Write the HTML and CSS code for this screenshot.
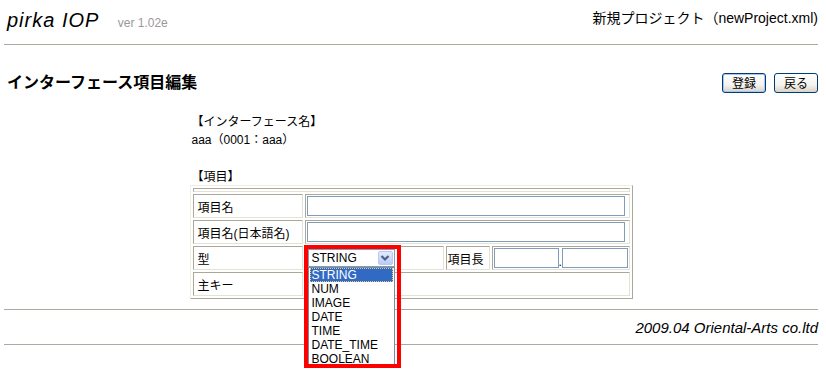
FILE: index.html
```html
<!DOCTYPE html>
<html lang="ja">
<head>
    <meta charset="UTF-8">
    <title>インターフェース項目編集</title>
    <link rel="stylesheet" href="styles.css">
</head>
<body>
    <div class="page">
        <div class="header">
            <div class="brand">
                <span class="logo">pirka IOP</span>
                <span class="ver">ver 1.02e</span>
            </div>
            <div class="project">新規プロジェクト（newProject.xml)</div>
        </div>
        <hr class="rule">

        <div class="title-bar">
            <h1>インターフェース項目編集</h1>
            <div class="actions">
                <button type="button" class="btn btn-default">登録</button>
                <button type="button" class="btn">戻る</button>
            </div>
        </div>

        <div class="content">
            <p class="line">【インターフェース名】</p>
            <p class="line">aaa（0001：aaa）</p>
            <p class="caption">【項目】</p>

            <table class="items">
                <colgroup>
                    <col class="c-label">
                    <col class="c-type">
                    <col class="c-sub">
                    <col class="c-len">
                </colgroup>
                <tr class="spacer">
                    <td colspan="4"></td>
                </tr>
                <tr>
                    <th>項目名</th>
                    <td colspan="3"><input type="text" class="longText" name="name"></td>
                </tr>
                <tr>
                    <th>項目名(日本語名)</th>
                    <td colspan="3"><input type="text" class="longText" name="jname"></td>
                </tr>
                <tr>
                    <th>型</th>
                    <td class="type-cell">
                        <div class="select-wrap">
                            <div class="select">
                                <span>STRING</span>
                                <span class="arrow">
                                    <svg width="12" height="12" viewBox="0 0 12 12"><path d="M2.5 4 L6 7.5 L9.5 4" fill="none" stroke="#4d6185" stroke-width="2.2"/></svg>
                                </span>
                            </div>
                            <ul class="options">
                                <li class="selected">STRING</li>
                                <li>NUM</li>
                                <li>IMAGE</li>
                                <li>DATE</li>
                                <li>TIME</li>
                                <li>DATE_TIME</li>
                                <li>BOOLEAN</li>
                            </ul>
                            <div class="mark"></div>
                        </div>
                    </td>
                    <th class="sub-label">項目長</th>
                    <td>
                        <div class="len">
                            <input type="text" class="shortText" name="len1"><span class="dot">.</span><input type="text" class="shortText wide" name="len2">
                        </div>
                    </td>
                </tr>
                <tr>
                    <th>主キー</th>
                    <td colspan="3"></td>
                </tr>
            </table>
        </div>

        <hr class="rule foot-rule">
        <div class="footer">2009.04 Oriental-Arts co.ltd</div>
        <hr class="rule">
    </div>
</body>
</html>
```

FILE: styles.css
```css
html,
body {
    height: 100%;
}

body {
    margin: 0;
    font-family: "Liberation Sans", "Noto Sans CJK JP", sans-serif;
    font-size: 12px;
    color: #000;
    background: #fff;
}

.page {
    min-height: 376px;
    padding: 0 8px 0 4px;
}

.header {
    display: flex;
    justify-content: space-between;
    align-items: flex-start;
    height: 36px;
    padding: 8px 0 0 3px;
}

.logo {
    font-size: 20px;
    line-height: 24px;
    font-style: italic;
    letter-spacing: 1px;
}

.ver {
    margin-left: 15px;
    font-size: 12px;
    color: #999999;
}

.project {
    font-size: 14px;
    line-height: 20px;
}

.rule {
    border: 0;
    border-top: 1px solid #acaa9f;
    height: 0;
    margin: 0;
}

.title-bar {
    display: flex;
    justify-content: space-between;
    align-items: center;
    height: 20px;
    margin-top: 28px;
    padding-left: 3px;
}

.title-bar h1 {
    margin: 0;
    font-size: 16px;
    line-height: 20px;
    font-weight: bold;
}

.actions {
    display: flex;
    gap: 8px;
}

.btn {
    width: 44px;
    height: 20px;
    padding: 0;
    font-family: "Noto Sans CJK JP", sans-serif;
    font-size: 12px;
    line-height: 16px;
    border: 1px solid #003c74;
    border-radius: 3px;
    background: linear-gradient(#ffffff, #f4f3ee 60%, #d8d3c8);
}

.btn-default {
    box-shadow: inset 0 0 0 1px #a9c4f0;
}

.content {
    width: 443px;
    margin: 20px auto 0;
}

.line {
    margin: 0;
    padding-left: 2px;
    line-height: 18px;
}

.caption {
    margin: 20px 0 0;
    padding-left: 2px;
    line-height: 16px;
}

/* 項目テーブル */
.items {
    width: 443px;
    table-layout: fixed;
    border-spacing: 2px;
    border: 1px solid;
    border-color: #f1efe2 #aca899 #aca899 #f1efe2;
}

.c-label { width: 110px; }
.c-type { width: 139px; }
.c-sub { width: 44px; }
.c-len { width: 138px; }

.items th,
.items td {
    height: 22px;
    padding: 0 1px;
    border: 1px solid;
    border-color: #aca899 #e4e1d5 #e4e1d5 #aca899;
    vertical-align: middle;
    white-space: nowrap;
}

.items th {
    text-align: left;
    font-weight: normal;
    padding-left: 4px;
}

.items .sub-label {
    padding-left: 1px;
}

.items .spacer td {
    height: 2px;
    padding: 0;
}

.longText {
    display: block;
    box-sizing: border-box;
    width: 318px;
    height: 20px;
    margin: 0;
    padding: 0 2px;
    border: 1px solid #7f9db9;
}

.len {
    display: flex;
    align-items: flex-end;
}

.shortText {
    box-sizing: border-box;
    width: 65px;
    height: 20px;
    margin: 0;
    padding: 0;
    border: 1px solid #7f9db9;
}

.shortText.wide {
    width: 66px;
}

.dot {
    width: 4px;
    line-height: 12px;
}

.type-cell {
    padding-left: 2px !important;
}

.select-wrap {
    position: relative;
    width: 87px;
}

.select {
    display: flex;
    justify-content: space-between;
    align-items: center;
    box-sizing: border-box;
    height: 18px;
    padding: 0 1px 0 3px;
    border: 1px solid #7f9db9;
    background: #fff;
}

.arrow {
    display: flex;
    align-items: center;
    justify-content: center;
    box-sizing: border-box;
    width: 15px;
    height: 14px;
    border: 1px solid #b7c9f2;
    border-radius: 2px;
    background: linear-gradient(#e3ebfd, #b9cbf6);
}

/* 開いたドロップダウン */
.options {
    position: absolute;
    top: 18px;
    left: 0;
    z-index: 2;
    box-sizing: border-box;
    width: 87px;
    margin: 0;
    padding: 0;
    list-style: none;
    border: 1px solid #7a8a9f;
    background: #fff;
}

.options li {
    height: 14px;
    margin: 0 1px;
    padding-left: 2px;
    line-height: 14px;
}

.options li.selected {
    box-sizing: border-box;
    padding-left: 1px;
    color: #fff;
    background: #316ac5;
    border: 1px dotted #e9c97a;
    line-height: 12px;
}

.mark {
    position: absolute;
    top: -4px;
    left: -4px;
    z-index: 3;
    box-sizing: border-box;
    width: 97px;
    height: 123px;
    border: 4px solid #ff0000;
}

.foot-rule {
    margin-top: 10px;
}

.footer {
    margin: 8px 0 6px;
    text-align: right;
    font-size: 15px;
    line-height: 20px;
    font-style: italic;
}
```
